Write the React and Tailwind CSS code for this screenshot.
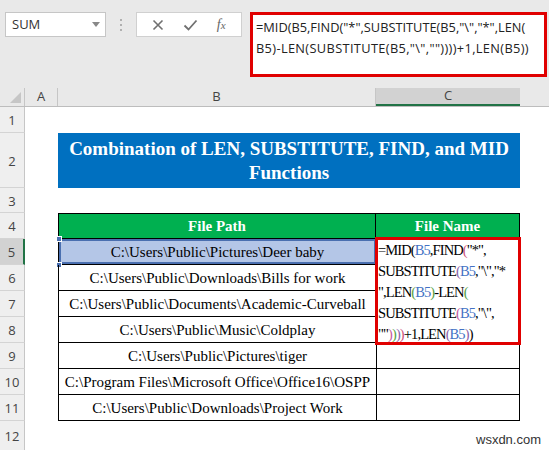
import React from "react";

const serif = { fontFamily: '"Liberation Serif", "Times New Roman", serif' };
const sans = { fontFamily: '"Open Sans", "Noto Sans", Arial, sans-serif' };

const paths = [
  "C:\\Users\\Public\\Pictures\\Deer baby",
  "C:\\Users\\Public\\Downloads\\Bills for work",
  "C:\\Users\\Public\\Documents\\Academic-Curveball",
  "C:\\Users\\Public\\Music\\Coldplay",
  "C:\\Users\\Public\\Pictures\\tiger",
  "C:\\Program Files\\Microsoft Office\\Office16\\OSPP",
  "C:\\Users\\Public\\Downloads\\Project Work",
];

function RowHead({ n, h, active }) {
  return (
    <div
      className={`w-[25px] shrink-0 flex items-center justify-center pt-[3px] text-[13px] text-[#444] border-b border-[#d4d4d4] ${
        active ? "bg-[#d2d2d2] border-r-2 border-r-[#217346]" : "bg-[#efefef] border-r border-r-[#c6c6c6]"
      }`}
      style={{ ...sans, height: h }}
    >
      {n}
    </div>
  );
}

function Formula() {
  const b = "text-[#4472c4]";
  const p1 = "text-[#d0527a]";
  const p2 = "text-[#8c62a8]";
  const p3 = "text-[#56a043]";
  const p4 = "text-[#c75aa0]";
  return (
    <div className="text-[14.5px] leading-[21px] tracking-[-0.9px] text-black whitespace-nowrap pl-[0px]" style={serif}>
      <div>=MID(<span className={b}>B5</span>,FIND<span className={p1}>(</span>"*",</div>
      <div>SUBSTITUTE<span className={p2}>(</span><span className={b}>B5</span>,"\","*</div>
      <div>",LEN<span className={p3}>(</span><span className={b}>B5</span><span className={p3}>)</span>-LEN<span className={p3}>(</span></div>
      <div>SUBSTITUTE<span className={p4}>(</span><span className={b}>B5</span>,"\",</div>
      <div>
        ""<span className={p4}>)</span><span className={p3}>)</span><span className={p2}>)</span><span className={p1}>)</span>+1,LEN<span className={p2}>(</span><span className={b}>B5</span><span className={p2}>)</span>)
      </div>
    </div>
  );
}

export default function App() {
  return (
    <div className="w-[549px] h-[450px] overflow-hidden bg-white relative" style={sans}>
      {/* toolbar */}
      <div className="h-[88px] bg-[#e9e9e9] flex items-start pt-[12px] pl-[5px]">
        <div className="w-[101px] h-[25px] bg-white border border-[#c6c6c6] flex items-center justify-between pl-[6px] pr-[5px] text-[13px] text-[#333]">
          <span>SUM</span>
          <span className="w-0 h-0 border-l-[4px] border-r-[4px] border-t-[5px] border-l-transparent border-r-transparent border-t-[#888]" />
        </div>
        <div className="ml-[14px] mt-[7px] flex flex-col gap-[3px]">
          <span className="w-[2px] h-[2px] bg-[#b0b0b0]" />
          <span className="w-[2px] h-[2px] bg-[#b0b0b0]" />
          <span className="w-[2px] h-[2px] bg-[#b0b0b0]" />
        </div>
        <div className="ml-[14px] w-[106px] h-[25px] bg-white border border-[#d0d0d0] flex items-center justify-around px-[6px] text-[#777]">
          <svg width="12" height="12" viewBox="0 0 12 12"><path d="M1.5 1.5l9 9M10.5 1.5l-9 9" stroke="#707070" strokeWidth="1.6" /></svg>
          <svg width="15" height="12" viewBox="0 0 15 12"><path d="M1.5 6.5l4 4 8-9" stroke="#707070" strokeWidth="1.8" fill="none" /></svg>
          <span className="italic text-[14px] text-[#666]" style={serif}>f<span className="text-[11px]">x</span></span>
        </div>
        <div className="ml-[8px] w-[297px] h-[65px] bg-white border-[3px] border-[#e00000] px-[3px] pt-[2px] text-[12.8px] leading-[21px] text-[#222] whitespace-nowrap">
          <div>=MID(B5,FIND("*",SUBSTITUTE(B5,"\","*",LEN(</div>
          <div className="tracking-[0.35px]">B5)-LEN(SUBSTITUTE(B5,"\",""))))+1,LEN(B5))</div>
        </div>
      </div>

      {/* column headers */}
      <div className="h-[19px] flex bg-[#e9e9e9] border-b border-[#bdbdbd] text-[13px] text-[#444]">
        <div className="w-[25px] border-r border-[#c6c6c6] flex items-end justify-end pr-[3px] pb-[3px]">
          <svg width="11" height="11" viewBox="0 0 11 11"><path d="M11 0V11H0Z" fill="#c6c6c6" /></svg>
        </div>
        <div className="w-[33px] border-r border-[#c6c6c6] flex items-center justify-center">A</div>
        <div className="w-[318px] border-r border-[#c6c6c6] flex items-center justify-center">B</div>
        <div className="w-[144px] bg-[#d2d2d2] border-b-2 border-[#217346] flex items-center justify-center">C</div>
        <div className="flex-1" />
      </div>

      {/* rows */}
      <div className="flex flex-col">
        <div className="flex">
          <RowHead n={1} h={26} />
        </div>
        <div className="flex">
          <RowHead n={2} h={55} />
          <div className="w-[33px]" />
          <div
            className="w-[462px] h-[55px] bg-[#0070c0] text-white font-bold text-[19px] leading-[24px] text-center flex items-center justify-center"
            style={serif}
          >
            Combination of LEN, SUBSTITUTE, FIND, and MID Functions
          </div>
        </div>
        <div className="flex">
          <RowHead n={3} h={25} />
        </div>
        <div className="flex">
          <RowHead n={4} h={26} />
          <div className="w-[33px]" />
          <div className="w-[318px] h-[26px] bg-[#00b050] border border-black text-white font-bold text-[15px] flex items-center justify-center" style={serif}>
            File Path
          </div>
          <div className="w-[144px] h-[26px] bg-[#00b050] border border-l-0 border-black text-white font-bold text-[15px] flex items-center justify-center" style={serif}>
            File Name
          </div>
        </div>
        {paths.map((p, i) => (
          <div className="flex" key={i}>
            <RowHead n={i + 5} h={26} active={i === 0} />
            <div className="w-[33px]" />
            <div
              className={`w-[318px] h-[26px] border-l border-b border-black text-[15px] text-black flex items-center justify-center pt-[1px] relative ${
                i === 0 ? "bg-[#b4c6e7]" : ""
              }`}
              style={serif}
            >
              {i === 0 && (
                <>
                  <span className="absolute inset-0 border-2 border-[#4a6fb0]" />
                  <span className="absolute left-[-3px] top-[-3px] w-[6px] h-[6px] bg-[#4a6fb0] border border-white" />
                  <span className="absolute left-[-3px] bottom-[-4px] w-[6px] h-[6px] bg-[#4a6fb0] border border-white" />
                </>
              )}
              <span className="relative">{p}</span>
            </div>
            <div className="w-[144px] h-[26px] border-l border-r border-b border-black" />
          </div>
        ))}
        <div className="flex">
          <RowHead n={12} h={30} />
        </div>
      </div>

      {/* formula shown in C5 */}
      <div className="absolute left-[375px] top-[237px] w-[146px] h-[108px] bg-white border-[3px] border-[#e00000] overflow-hidden">
        <Formula />
      </div>

      <div className="absolute left-[476px] top-[430px] text-[13px] text-[#333]" style={{ fontFamily: '"Liberation Sans", Arial, sans-serif' }}>
        wsxdn.com
      </div>
    </div>
  );
}
